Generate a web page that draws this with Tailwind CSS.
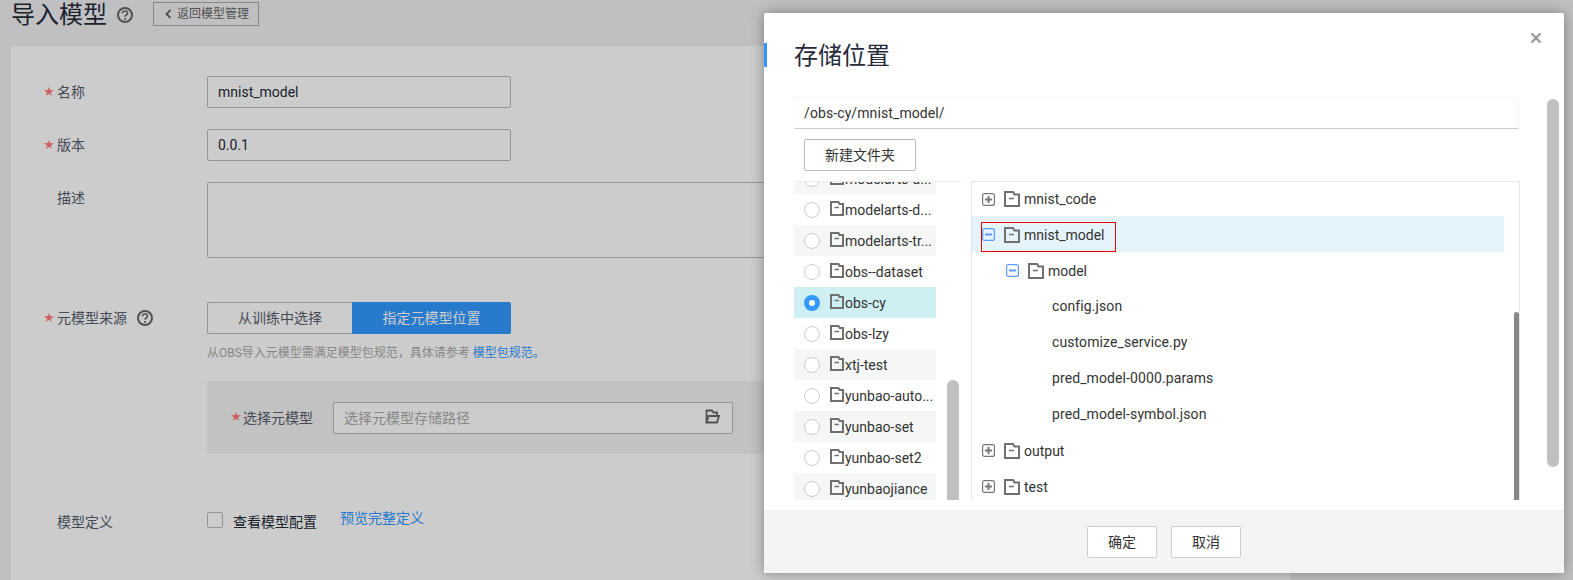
<!DOCTYPE html>
<html lang="zh-CN">
<head>
  <meta charset="UTF-8" />
  <title>导入模型</title>
  <script src="https://cdn.jsdelivr.net/npm/@tailwindcss/browser@4"></script>
</head>
<body class="bg-[#f0f1f3] font-['Roboto','Noto_Sans_CJK_SC',sans-serif] text-sm text-[#252b3a]">

  <svg class="hidden">
    <symbol id="folder" viewBox="0 0 16 16">
      <path d="M1 1h8l1.500 2.500H15V15H1z" fill="none" stroke="currentColor" stroke-width="2" />
      <path d="M5 7.500h5" fill="none" stroke="currentColor" stroke-width="1.500" />
    </symbol>
    <symbol id="folder-sm" viewBox="0 0 14 15">
      <path d="M1 1h7.500l1 2H13v11H1z" fill="none" stroke="currentColor" stroke-width="2" />
      <path d="M4.500 6.500h4.500" fill="none" stroke="currentColor" stroke-width="1.500" />
    </symbol>
    <symbol id="plus" viewBox="0 0 13 13">
      <rect x="0.600" y="0.600" width="11.800" height="11.800" rx="2" fill="none" stroke="currentColor" stroke-width="1.200" />
      <path d="M3 6.500h7M6.500 3v7" fill="none" stroke="currentColor" stroke-width="2" />
    </symbol>
    <symbol id="minus" viewBox="0 0 13 13">
      <rect x="0.600" y="0.600" width="11.800" height="11.800" rx="2" fill="none" stroke="currentColor" stroke-width="1.200" />
      <path d="M3 6.500h7" fill="none" stroke="currentColor" stroke-width="2" />
    </symbol>
    <symbol id="help" viewBox="0 0 16 16">
      <circle cx="8" cy="8" r="7" fill="none" stroke="currentColor" stroke-width="2" />
      <path d="M5.500 6.300c0-1.400 1.100-2.300 2.500-2.300s2.500.9 2.500 2.200c0 1.800-2.500 1.700-2.500 3.500" fill="none" stroke="currentColor" stroke-width="1.700" />
      <circle cx="8" cy="12" r="1.100" fill="currentColor" />
    </symbol>
  </svg>

  <div class="relative h-[580px] w-[1573px] overflow-hidden">
    <!-- page behind the dialog -->
    <div class="flex h-[46px] items-start pl-[11px]">
      <h1 class="text-2xl leading-[31px] text-[#252b3a]">导入模型</h1>
      <svg class="mt-[7px] ml-[10px] h-4 w-4 text-[#666]"><use href="#help" /></svg>
      <button class="mt-[2px] ml-[20px] flex h-6 w-[106px] items-center border border-[#aaa] pl-[11px] text-xs text-[#666]">
        <svg class="mr-[5px] h-[10px] w-[7px]" viewBox="0 0 7 10"><path d="M5.500 1L1.500 5l4 4" fill="none" stroke="currentColor" stroke-width="1.800" /></svg>
        返回模型管理
      </button>
    </div>

    <div class="ml-[11px] h-[534px] w-[1280px] bg-white pt-[30px] pl-[33px] text-[#575d6c]">
      <div class="flex">
        <label class="flex h-8 w-[163px] items-center"><span class="w-[13px] text-[10px] text-[#f77]">★</span>名称</label>
        <div class="flex h-8 w-[304px] items-center rounded-[2px] border border-[#bbb] pl-[10px] text-[#252b3a]">mnist_model</div>
      </div>
      <div class="mt-[21px] flex">
        <label class="flex h-8 w-[163px] items-center"><span class="w-[13px] text-[10px] text-[#f77]">★</span>版本</label>
        <div class="flex h-8 w-[304px] items-center rounded-[2px] border border-[#bbb] pl-[10px] text-[#252b3a]">0.0.1</div>
      </div>
      <div class="mt-[21px] flex">
        <label class="flex h-8 w-[163px] items-center pl-[13px]">描述</label>
        <div class="h-[76px] w-[700px] rounded-[2px] border border-[#bbb]"></div>
      </div>

      <div class="mt-[44px] flex">
        <label class="flex h-8 w-[163px] items-center"><span class="w-[13px] text-[10px] text-[#f77]">★</span>元模型来源
          <svg class="ml-[10px] h-4 w-4 text-[#666]"><use href="#help" /></svg>
        </label>
        <div class="flex h-8 w-[304px]">
          <div class="flex w-[145px] items-center justify-center rounded-l-[2px] border border-r-0 border-[#bbb]">从训练中选择</div>
          <div class="flex w-[159px] items-center justify-center rounded-r-[2px] bg-[#3399ff] text-white">指定元模型位置</div>
        </div>
      </div>
      <p class="mt-[11px] ml-[163px] text-xs leading-4 text-[#aaa]">从OBS导入元模型需满足模型包规范，具体请参考 <a class="text-[#3399ff]">模型包规范。</a></p>

      <div class="mt-5 ml-[163px] flex h-[73px] w-[1000px] items-center bg-[#f3f3f3] pl-[24px]">
        <label class="flex w-[102px] items-center"><span class="w-3 text-[10px] text-[#f77]">★</span>选择元模型</label>
        <div class="flex h-8 w-[400px] items-center justify-between rounded-[2px] border border-[#bbb] bg-white pr-[12px] pl-[10px] text-[#aaa]">
          选择元模型存储路径
          <svg class="mb-[3px] h-[15px] w-[15px] text-[#666]" viewBox="0 0 15 15">
            <path d="M1.500 13.500V1.500h5.500l1.500 2h3.500v3" fill="none" stroke="currentColor" stroke-width="1.800" />
            <path d="M1.500 13.500l2-6.500H14l-2 6.500z" fill="none" stroke="currentColor" stroke-width="1.800" />
          </svg>
        </div>
      </div>

      <div class="mt-[58px] flex">
        <label class="flex w-[163px] items-center pl-[13px]">模型定义</label>
        <div class="h-4 w-4 rounded-[2px] border border-[#bbb]"></div>
        <span class="ml-[10px] text-[#252b3a]">查看模型配置</span>
        <a class="-mt-1 ml-[23px] text-[#3399ff]">预览完整定义</a>
      </div>
    </div>

    <!-- overlay -->
    <div class="absolute inset-0 bg-black/20"></div>

    <!-- dialog -->
    <div class="absolute top-[13px] left-[764px] h-[560px] w-[800px] rounded-[2px] bg-white shadow-[0_0_14px_rgba(0,0,0,0.35)]">
      <button class="absolute top-[19px] right-[22px] h-3 w-3 text-[#999]">
        <svg viewBox="0 0 12 12" class="h-3 w-3"><path d="M1.500 1.500l9 9M10.500 1.500l-9 9" fill="none" stroke="currentColor" stroke-width="2.400" /></svg>
      </button>

      <h2 class="mt-[30px] flex h-6 items-center border-l-[3px] border-[#3399ff] pt-[2px] pl-[27px] text-2xl text-[#252b3a]">存储位置</h2>

      <div class="mt-[30px] ml-[30px] flex h-8 w-[725px] items-center border border-[#f7f7f7] border-b-[#ccc] pl-[9px] tracking-[0.1px] text-[#333]">/obs-cy/mnist_model/</div>
      <button class="mt-[10px] ml-[40px] block h-8 w-[112px] rounded-[2px] border border-[#bbb] text-[#333]">新建文件夹</button>

      <div class="mt-[10px] ml-[30px] flex h-[319px] overflow-hidden">
        <!-- bucket list -->
        <div class="relative w-[167px] overflow-hidden border-t border-[#eee]">
          <ul class="-mt-[19px] w-[142px] text-[#333]">
            <li class="flex h-[31px] items-center bg-[#f5f7f6] pl-[10px]">
              <span class="h-4 w-4 rounded-full border border-[#ccc] bg-white"></span>
              <svg class="mr-px mb-[2px] ml-[10px] h-[15px] w-[14px] text-[#707070]"><use href="#folder-sm" /></svg>modelarts-d...
            </li>
            <li class="flex h-[31px] items-center pl-[10px]">
              <span class="h-4 w-4 rounded-full border border-[#ccc] bg-white"></span>
              <svg class="mr-px mb-[2px] ml-[10px] h-[15px] w-[14px] text-[#707070]"><use href="#folder-sm" /></svg>modelarts-d...
            </li>
            <li class="flex h-[31px] items-center bg-[#f5f7f6] pl-[10px]">
              <span class="h-4 w-4 rounded-full border border-[#ccc] bg-white"></span>
              <svg class="mr-px mb-[2px] ml-[10px] h-[15px] w-[14px] text-[#707070]"><use href="#folder-sm" /></svg>modelarts-tr...
            </li>
            <li class="flex h-[31px] items-center pl-[10px]">
              <span class="h-4 w-4 rounded-full border border-[#ccc] bg-white"></span>
              <svg class="mr-px mb-[2px] ml-[10px] h-[15px] w-[14px] text-[#707070]"><use href="#folder-sm" /></svg>obs--dataset
            </li>
            <li class="flex h-[31px] items-center bg-[#cff0f3] pl-[10px]">
              <span class="flex h-4 w-4 items-center justify-center rounded-full bg-[#3399ff]"><span class="h-[6px] w-[6px] rounded-full bg-white"></span></span>
              <svg class="mr-px mb-[2px] ml-[10px] h-[15px] w-[14px] text-[#707070]"><use href="#folder-sm" /></svg>obs-cy
            </li>
            <li class="flex h-[31px] items-center pl-[10px]">
              <span class="h-4 w-4 rounded-full border border-[#ccc] bg-white"></span>
              <svg class="mr-px mb-[2px] ml-[10px] h-[15px] w-[14px] text-[#707070]"><use href="#folder-sm" /></svg>obs-lzy
            </li>
            <li class="flex h-[31px] items-center bg-[#f5f7f6] pl-[10px]">
              <span class="h-4 w-4 rounded-full border border-[#ccc] bg-white"></span>
              <svg class="mr-px mb-[2px] ml-[10px] h-[15px] w-[14px] text-[#707070]"><use href="#folder-sm" /></svg>xtj-test
            </li>
            <li class="flex h-[31px] items-center pl-[10px] whitespace-nowrap">
              <span class="h-4 w-4 rounded-full border border-[#ccc] bg-white"></span>
              <svg class="mr-px mb-[2px] ml-[10px] h-[15px] w-[14px] text-[#707070]"><use href="#folder-sm" /></svg>yunbao-auto...
            </li>
            <li class="flex h-[31px] items-center bg-[#f5f7f6] pl-[10px]">
              <span class="h-4 w-4 rounded-full border border-[#ccc] bg-white"></span>
              <svg class="mr-px mb-[2px] ml-[10px] h-[15px] w-[14px] text-[#707070]"><use href="#folder-sm" /></svg>yunbao-set
            </li>
            <li class="flex h-[31px] items-center pl-[10px]">
              <span class="h-4 w-4 rounded-full border border-[#ccc] bg-white"></span>
              <svg class="mr-px mb-[2px] ml-[10px] h-[15px] w-[14px] text-[#707070]"><use href="#folder-sm" /></svg>yunbao-set2
            </li>
            <li class="flex h-[31px] items-center bg-[#f5f7f6] pl-[10px]">
              <span class="h-4 w-4 rounded-full border border-[#ccc] bg-white"></span>
              <svg class="mr-px mb-[2px] ml-[10px] h-[15px] w-[14px] text-[#707070]"><use href="#folder-sm" /></svg>yunbaojiance
            </li>
          </ul>
          <div class="absolute top-[198px] left-[153px] h-[140px] w-3 rounded-md bg-[#c0c0c0]"></div>
        </div>

        <!-- folder tree -->
        <div class="relative ml-[10px] h-[319px] w-[549px] overflow-hidden border border-b-0 border-[#e5e5e5] text-[#333]">
          <div class="flex h-[34px] items-center pl-[10px]">
            <svg class="h-[13px] w-[13px] text-[#777]"><use href="#plus" /></svg>
            <svg class="mr-1 ml-[9px] h-4 w-4 text-[#707070]"><use href="#folder" /></svg>mnist_code
          </div>
          <div class="relative flex h-9 w-[532px] items-center bg-[#e5f3fd] pt-[2px] pl-[10px]">
            <svg class="mb-[2px] h-[13px] w-[13px] text-[#5b9bff]"><use href="#minus" /></svg>
            <svg class="mr-1 ml-[9px] h-4 w-4 text-[#707070]"><use href="#folder" /></svg>mnist_model
            <div class="absolute top-[6px] left-[9px] h-[30px] w-[135px] border border-[#e00]"></div>
          </div>
          <div class="flex h-9 items-center pt-[2px] pl-[34px]">
            <svg class="mb-[2px] h-[13px] w-[13px] text-[#5b9bff]"><use href="#minus" /></svg>
            <svg class="mr-1 ml-[9px] h-4 w-4 text-[#707070]"><use href="#folder" /></svg>model
          </div>
          <div class="flex h-9 items-center pl-[80px] tracking-[0.1px]">config.json</div>
          <div class="flex h-9 items-center pl-[80px] tracking-[0.1px]">customize_service.py</div>
          <div class="flex h-9 items-center pl-[80px] tracking-[0.1px]">pred_model-0000.params</div>
          <div class="flex h-9 items-center pl-[80px] tracking-[0.1px]">pred_model-symbol.json</div>
          <div class="flex h-9 items-center pt-[2px] pl-[10px]">
            <svg class="mb-[2px] h-[13px] w-[13px] text-[#777]"><use href="#plus" /></svg>
            <svg class="mr-1 ml-[9px] h-4 w-4 text-[#707070]"><use href="#folder" /></svg>output
          </div>
          <div class="flex h-9 items-center pt-[2px] pl-[10px]">
            <svg class="mb-[2px] h-[13px] w-[13px] text-[#777]"><use href="#plus" /></svg>
            <svg class="mr-1 ml-[9px] h-4 w-4 text-[#707070]"><use href="#folder" /></svg>test
          </div>
          <div class="absolute top-[130px] right-0 h-[188px] w-[5px] rounded-t-sm bg-[#888]"></div>
        </div>
      </div>

      <!-- dialog scrollbar -->
      <div class="absolute top-[86px] left-[783px] h-[368px] w-3 rounded-md bg-[#c0c0c0]"></div>

      <div class="mt-[10px] flex h-[63px] items-center justify-center gap-[14px] border-t border-[#eee] bg-[#f4f4f4]">
        <button class="h-8 w-[70px] rounded-[2px] border border-[#ccc] bg-white text-[#333]">确定</button>
        <button class="h-8 w-[70px] rounded-[2px] border border-[#ccc] bg-white text-[#333]">取消</button>
      </div>
    </div>
  </div>
</body>
</html>
